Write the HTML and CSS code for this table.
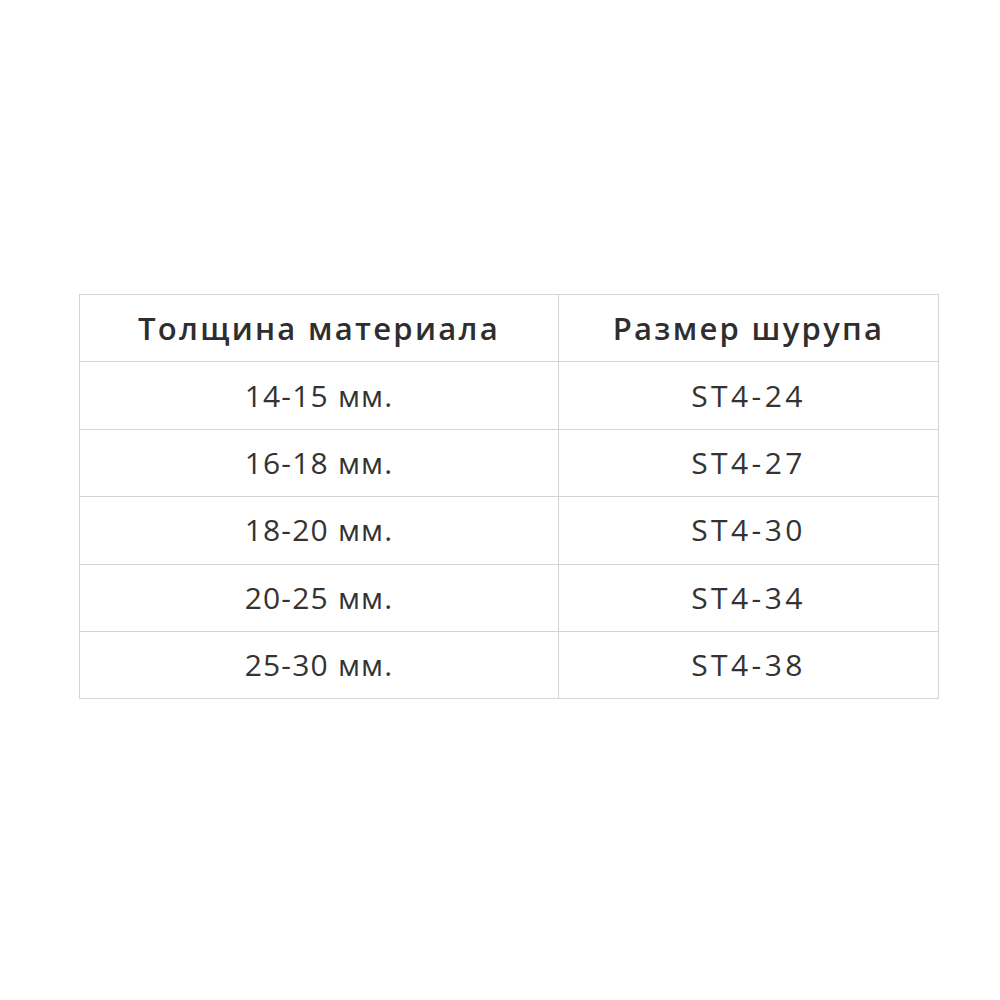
FILE: index.html
```html
<!DOCTYPE html>
<html lang="ru">
<head>
<meta charset="utf-8">
<link rel="stylesheet" href="styles.css">
</head>
<body>
<div class="page">
<table class="spec">
<thead>
<tr><th class="c1">Толщина материала</th><th class="c2">Размер шурупа</th></tr>
</thead>
<tbody>
<tr><td>14-15 мм.</td><td>ST4-24</td></tr>
<tr><td>16-18 мм.</td><td>ST4-27</td></tr>
<tr><td>18-20 мм.</td><td>ST4-30</td></tr>
<tr><td>20-25 мм.</td><td>ST4-34</td></tr>
<tr><td>25-30 мм.</td><td>ST4-38</td></tr>
</tbody>
</table>
</div>
</body>
</html>
```
FILE: styles.css
```css
html, body { margin: 0; padding: 0; background: #ffffff; }
.page { padding: 294px 0 0 79px; }
.spec {
  border-collapse: collapse;
  width: 857px;
  font-family: "Open Sans", "Noto Sans", sans-serif;
  color: #333333;
  table-layout: fixed;
}
.spec th, .spec td {
  border: 1px solid #d4d4d4;
  height: 66.4px;
  padding: 0;
  text-align: center;
  vertical-align: middle;
  line-height: 1;
}
.spec th {
  font-weight: 600;
  font-size: 31px;
  letter-spacing: 2.3px;
  color: #2e2e2e;
}
.spec td {
  font-weight: 400;
  font-size: 30px;
  letter-spacing: 1.2px;
}
.spec td + td { letter-spacing: 3.4px; }
.c1 { width: 478px; }
.c2 { width: 379px; }
```
